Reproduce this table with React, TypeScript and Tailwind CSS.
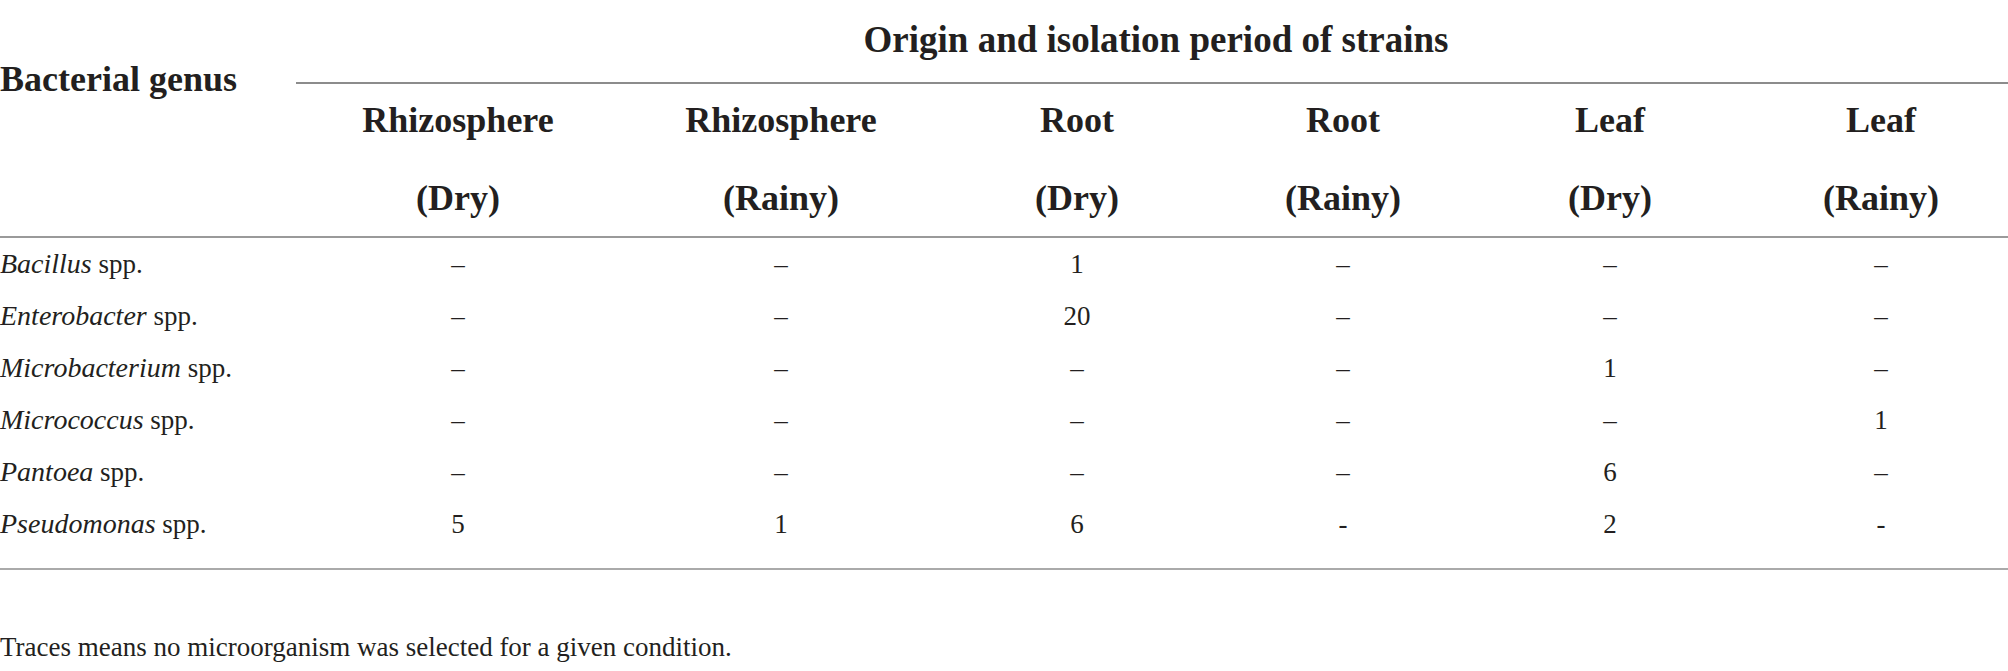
const columns = [
  { place: "Rhizosphere", season: "(Dry)" },
  { place: "Rhizosphere", season: "(Rainy)" },
  { place: "Root", season: "(Dry)" },
  { place: "Root", season: "(Rainy)" },
  { place: "Leaf", season: "(Dry)" },
  { place: "Leaf", season: "(Rainy)" },
]

const rows = [
  { genus: "Bacillus", values: ["–", "–", "1", "–", "–", "–"] },
  { genus: "Enterobacter", values: ["–", "–", "20", "–", "–", "–"] },
  { genus: "Microbacterium", values: ["–", "–", "–", "–", "1", "–"] },
  { genus: "Micrococcus", values: ["–", "–", "–", "–", "–", "1"] },
  { genus: "Pantoea", values: ["–", "–", "–", "–", "6", "–"] },
  { genus: "Pseudomonas", values: ["5", "1", "6", "-", "2", "-"] },
]

const grid = "grid grid-cols-[296px_324px_322px_270px_262px_272px_1fr]"

export default function App() {
  return (
    <div className="w-[2008px] h-[671px] bg-white text-[#231f20] font-['Liberation_Serif',serif]">
      {/* header */}
      <div className={`${grid} border-b-2 border-[#9a9a9a]`}>
        <div className="row-span-2 pt-[59px] text-[36px] leading-[40px] font-bold">Bacterial genus</div>
        <div className="col-span-6 h-[84px] flex items-center justify-center border-b-2 border-[#8c8c8c] text-[37px] font-bold pb-[2px] pl-[8px]">
          Origin and isolation period of strains
        </div>
        {columns.map((c, i) => (
          <div
            key={i}
            className={`flex flex-col items-center pt-[16px] pb-[18px] gap-[38px] text-[36px] leading-[40px] font-bold ${i === 5 ? "pl-[8px]" : ""}`}
          >
            <span>{c.place}</span>
            <span>{c.season}</span>
          </div>
        ))}
      </div>

      {/* body */}
      <div className="border-b-2 border-[#aaaaaa] pb-[18px]">
        {rows.map((r) => (
          <div key={r.genus} className={`${grid} h-[52px] items-center text-[27px] leading-[32px]`}>
            <div>
              <i className="text-[28px]">{r.genus}</i> spp.
            </div>
            {r.values.map((v, i) => (
              <div key={i} className={`text-center ${i === 5 ? "pl-[8px]" : ""}`}>
                {v}
              </div>
            ))}
          </div>
        ))}
      </div>

      <p className="mt-[61px] text-[27px] leading-[32px]">
        Traces means no microorganism was selected for a given condition.
      </p>
    </div>
  )
}
